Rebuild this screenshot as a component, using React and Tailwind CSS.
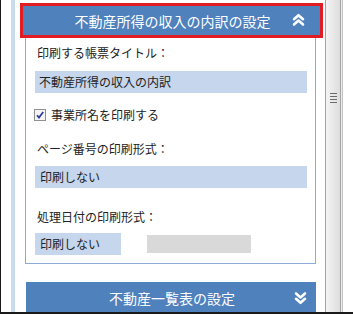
import React from 'react';

const jp = { fontFamily: '"Noto Sans CJK JP", "Noto Sans", sans-serif' };

const Chevrons = ({ down }) => (
    <svg width="13" height="14" viewBox="0 0 13 14" fill="none" stroke="#fff" strokeWidth="2.6" strokeLinecap="round" strokeLinejoin="round">
        {down ? (
            <>
                <path d="M2 2.5 L6.5 6.5 L11 2.5" />
                <path d="M2 7.8 L6.5 11.8 L11 7.8" />
            </>
        ) : (
            <>
                <path d="M2 6.2 L6.5 2.2 L11 6.2" />
                <path d="M2 11.5 L6.5 7.5 L11 11.5" />
            </>
        )}
    </svg>
);

const CheckBox = () => (
    <svg width="12" height="12" viewBox="0 0 12 12">
        <rect x="0.5" y="0.5" width="11" height="11" fill="#f4f4f4" stroke="#8e8f8f" />
        <path d="M3 6.2 L5 8.6 L9.2 3" fill="none" stroke="#2b3a9a" strokeWidth="1.7" />
    </svg>
);

const App = () => {
    return (
        <div className="w-[353px] h-[314px] bg-white border-l border-b-2 border-[#1a1a1a] flex overflow-hidden text-[#222]" style={jp}>
            {/* left gutter */}
            <div className="w-[19px] shrink-0 flex">
                <div className="ml-[10px] w-[4px] h-full bg-[#c9dbf1]"></div>
            </div>

            {/* main column */}
            <div className="w-[303px] shrink-0 pt-[3px]">
                <div className="h-[35px] border-[3px] border-[#e21c23]">
                    <div className="h-full bg-[#4f81bd] relative flex items-center justify-center">
                        <span className="text-white text-[14px] leading-none pl-[2px]">不動産所得の収入の内訳の設定</span>
                        <div className="absolute right-[15px] top-[7px]">
                            <Chevrons />
                        </div>
                    </div>
                </div>

                <div className="ml-[5px] w-[291px] h-[226px] border border-t-0 border-[#8eaad6] px-[9px] pr-[8px] pt-[6px] text-[12px]">
                    <div className="h-[18px] leading-[18px] pl-[2px]">印刷する帳票タイトル：</div>
                    <div className="mt-[9px] h-[22px] bg-[#c6d6ec] flex items-center pl-[4px]">不動産所得の収入の内訳</div>
                    <div className="mt-[13px] h-[18px] flex items-center -ml-[1px]">
                        <CheckBox />
                        <span className="ml-[5px] leading-[18px]">事業所名を印刷する</span>
                    </div>
                    <div className="mt-[16px] h-[18px] leading-[18px] pl-[2px]">ページ番号の印刷形式：</div>
                    <div className="mt-[8px] h-[22px] bg-[#c6d6ec] flex items-center pl-[5px]">印刷しない</div>
                    <div className="mt-[20px] h-[18px] leading-[18px] pl-[2px]">処理日付の印刷形式：</div>
                    <div className="mt-[7px] flex items-center gap-[26px]">
                        <div className="w-[86px] h-[22px] bg-[#c6d6ec] flex items-center pl-[5px]">印刷しない</div>
                        <div className="w-[104px] h-[18px] bg-[#d9d9d9]"></div>
                    </div>
                </div>

                <div className="mt-[18px] ml-[6px] w-[290px] h-[31px] bg-[#4f81bd] relative flex items-center justify-center">
                    <span className="text-white text-[14px] leading-none pl-[2px]">不動産一覧表の設定</span>
                    <div className="absolute right-[9px] top-[9px]">
                        <Chevrons down />
                    </div>
                </div>
            </div>

            {/* scrollbar */}
            <div className="ml-[2px] shrink-0 h-full flex">
                <div className="w-[16px] h-full border-l border-r border-[#a3a3a3] bg-gradient-to-r from-[#f4f4f4] to-[#dedede] flex flex-col items-center">
                    <div className="mt-[93px] w-[7px] flex flex-col gap-[2px]">
                        <div className="h-px bg-[#6b6b6b]"></div>
                        <div className="h-px bg-[#6b6b6b]"></div>
                        <div className="h-px bg-[#6b6b6b]"></div>
                        <div className="h-px bg-[#6b6b6b]"></div>
                    </div>
                </div>
                <div className="w-[2px] h-full bg-[#ececec] border-r border-[#c4c4c4]"></div>
            </div>
        </div>
    );
};

export default App;
